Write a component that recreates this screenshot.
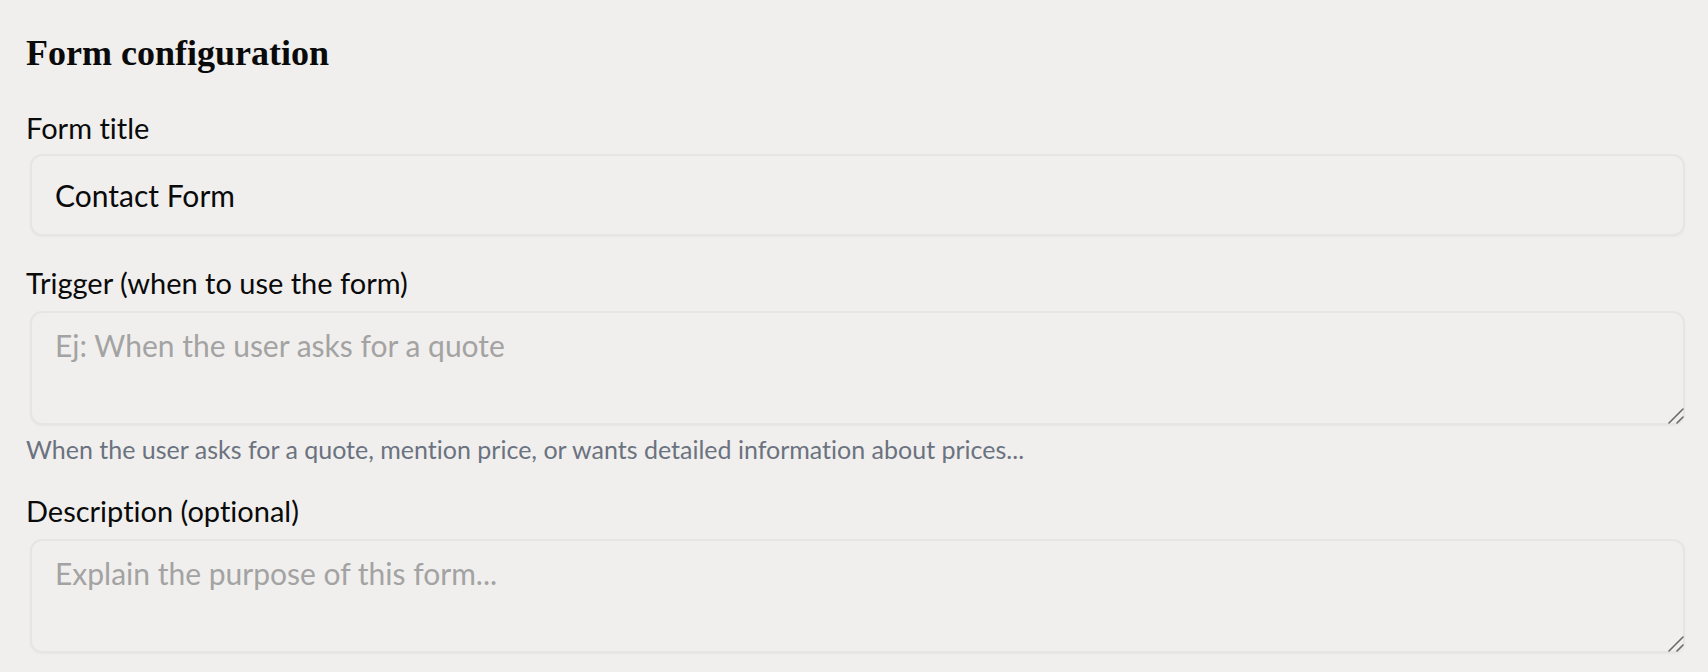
import { useState } from 'react';

const boxClass =
  'ml-[4px] mr-[1px] block w-[calc(100%-5px)] rounded-[12px] border-2 border-[#e6e5e3] bg-[#f0efed] px-[23px] text-[30px] text-[#0a0a0a] shadow-[0_1px_2px_rgba(0,0,0,0.04)] outline-none placeholder:text-[#a3a3a3] font-["Lato",sans-serif] [font-variant-ligatures:none]';

// textarea with a drawn resize grip in the corner
function Area({ value, onChange, placeholder }) {
  return (
    <div className="relative mt-[10px]">
      <textarea
        value={value}
        onChange={onChange}
        placeholder={placeholder}
        className={boxClass + ' h-[114px] resize-none py-[12px] leading-[40px]'}
      />
      <svg className="pointer-events-none absolute bottom-[1px] right-[2px] h-[17px] w-[17px]" viewBox="0 0 17 17">
        <path d="M2 16 L16 2 M10 16 L16 10" stroke="#6b6b6b" strokeWidth="1.6" strokeLinecap="round" />
      </svg>
    </div>
  );
}

export default function App() {
  const [title, setTitle] = useState('Contact Form');
  const [trigger, setTrigger] = useState('');
  const [description, setDescription] = useState('');

  return (
    <div className="min-h-screen bg-[#f0efed] pl-[26px] pr-[22px] pt-[29px] font-['Lato',sans-serif] text-[#0a0a0a] [font-variant-ligatures:none]">
      <h2 className="font-['Liberation_Serif',serif] text-[36px] font-bold leading-[48px]">Form configuration</h2>

      {/* Form title */}
      <label className="mt-[33px] block text-[29px] leading-[36px]">Form title</label>
      <input
        type="text"
        value={title}
        onChange={(e) => setTitle(e.target.value)}
        className={boxClass + ' mt-[8px] h-[82px]'}
      />

      {/* Trigger */}
      <label className="mt-[29px] block text-[29px] leading-[36px]">Trigger (when to use the form)</label>
      <Area
        value={trigger}
        onChange={(e) => setTrigger(e.target.value)}
        placeholder="Ej: When the user asks for a quote"
      />
      <p className="mt-[8px] text-[25px] leading-[32px] text-[#6b7280]">
        When the user asks for a quote, mention price, or wants detailed information about prices...
      </p>

      {/* Description */}
      <label className="mt-[28px] block text-[29px] leading-[36px]">Description (optional)</label>
      <Area
        value={description}
        onChange={(e) => setDescription(e.target.value)}
        placeholder="Explain the purpose of this form..."
      />
    </div>
  );
}
